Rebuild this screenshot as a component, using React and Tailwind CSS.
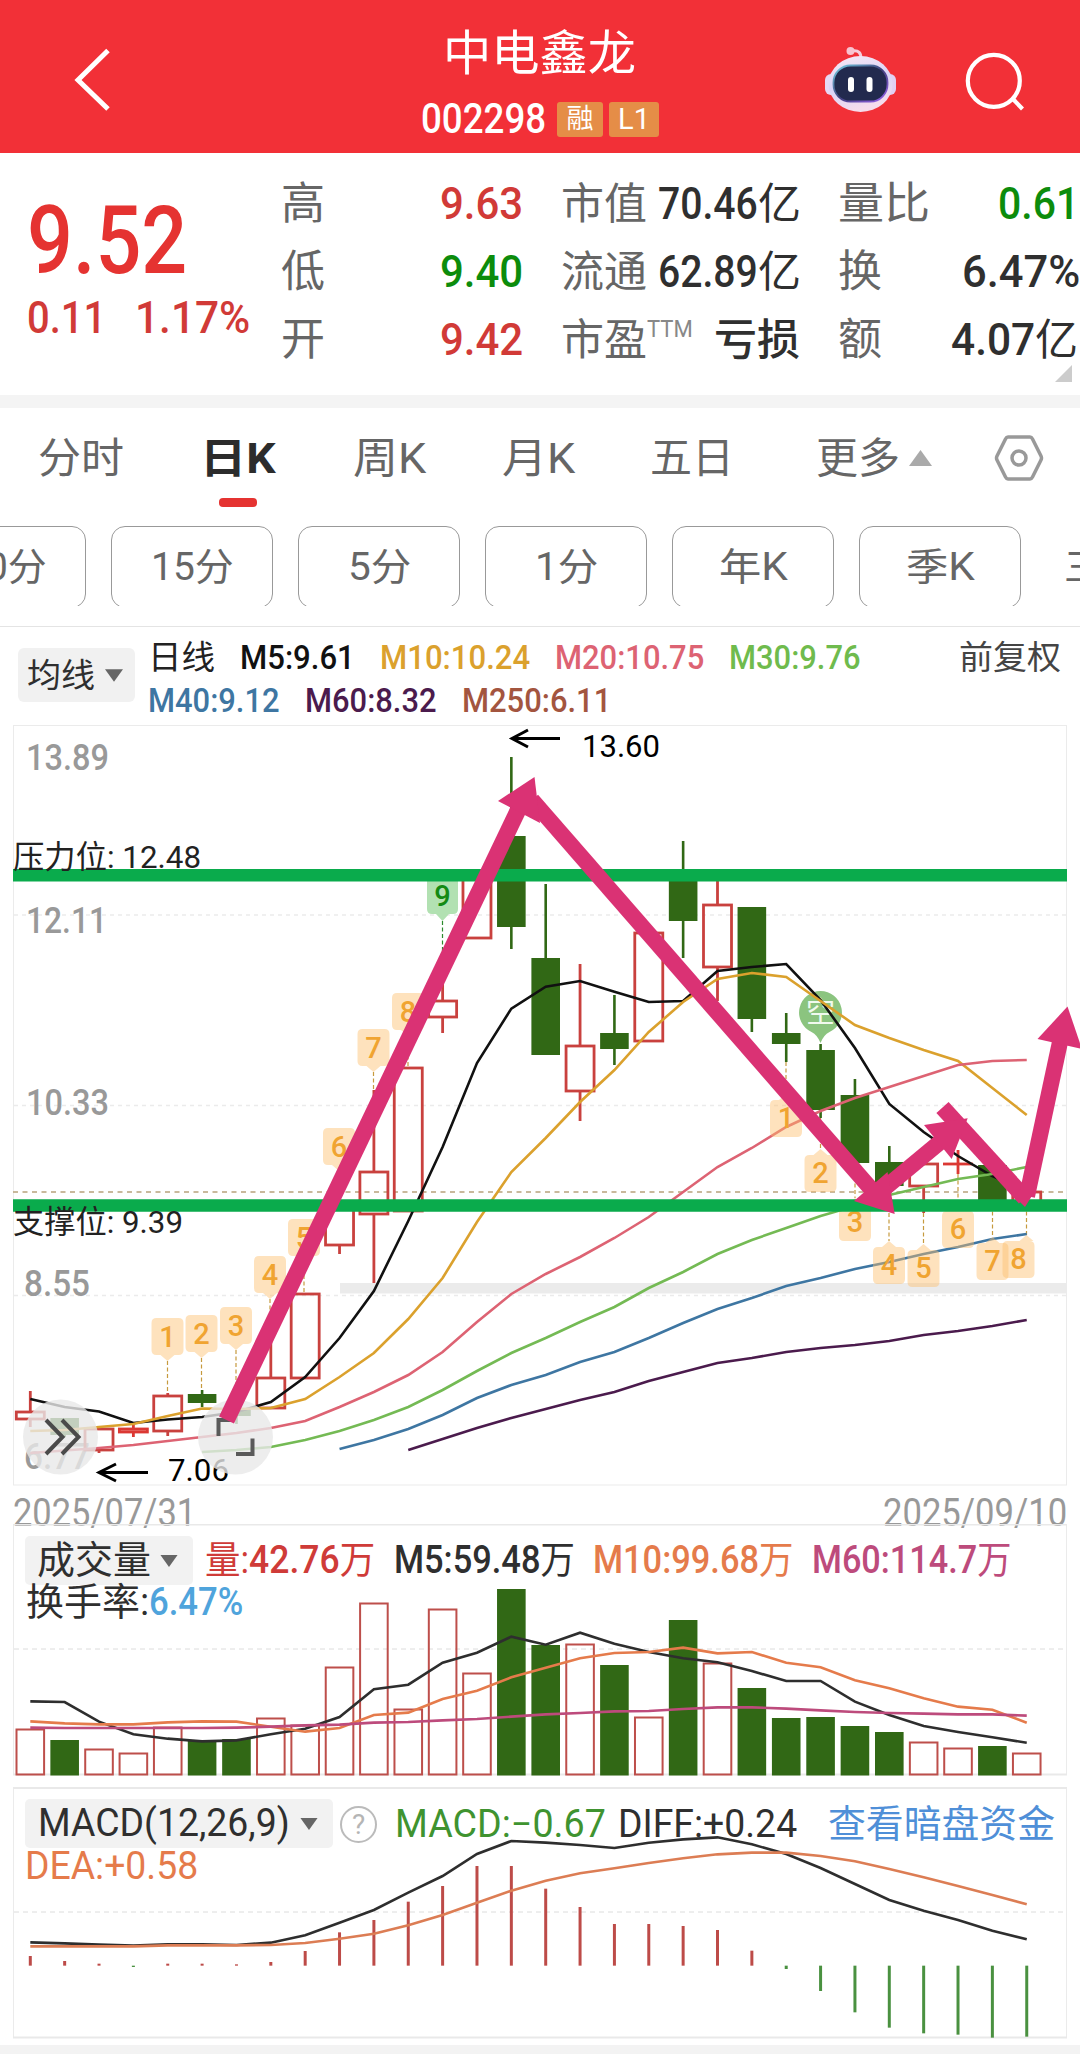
import { useLayoutEffect, useRef, useState } from "react";

const RED = "#c9413e";
const GREEN = "#316815";
const PINK = "#da3274";
const TAG = "#f0a431";

// x of the nth trading day, shared by all three charts
const cx = (i) => 30.3 + i * 34.36;

// [top, bottom, high, low, color]
const candles = [
  [1412, 1419, 1391, 1427, "r"],
  [1418, 1435, 1418, 1437, "g"],
  [1429, 1450, 1429, 1453, "r"],
  [1429, 1432, 1425, 1437, "r"],
  [1396, 1431, 1393, 1436, "r"],
  [1394, 1403, 1390, 1407, "g"],
  [1408, 1416, 1404, 1424, "g"],
  [1378, 1408, 1338, 1408, "r"],
  [1294, 1378, 1294, 1378, "r"],
  [1205, 1245, 1205, 1254, "r"],
  [1172, 1214, 1090, 1283, "r"],
  [1068, 1211, 1068, 1211, "r"],
  [1001, 1017, 983, 1033, "r"],
  [878, 938, 878, 938, "r"],
  [836, 927, 757, 949, "g"],
  [958, 1055, 884, 1055, "g"],
  [1046, 1091, 964, 1121, "r"],
  [1033, 1049, 995, 1065, "g"],
  [933, 1041, 933, 1041, "r"],
  [874, 921, 841, 958, "g"],
  [905, 967, 878, 1001, "r"],
  [907, 1019, 907, 1032, "g"],
  [1033, 1044, 1013, 1062, "g"],
  [1050, 1110, 1044, 1118, "g"],
  [1095, 1163, 1079, 1163, "g"],
  [1162, 1186, 1146, 1186, "g"],
  [1164, 1186, 1164, 1213, "r"],
  [1164, 1164, 1150, 1174, "r"],
  [1165, 1205, 1165, 1205, "g"],
  [1192, 1205, 1192, 1205, "r"],
];

const averages = [
  { color: "#111111", from: 0, y: [1399, 1407, 1411.5, 1423, 1419.5, 1417, 1412, 1402, 1377, 1338, 1291, 1221, 1147, 1063, 1008.6, 986.7, 981, 991.7, 1002, 1001, 971, 967, 964, 1000, 1048, 1104, 1132, 1156, 1176, 1191] },
  { color: "#dba12d", from: 0, y: [1431, 1430, 1427, 1424, 1416, 1408.5, 1409, 1408, 1399, 1377, 1353, 1319, 1278, 1222, 1172, 1138, 1102, 1070, 1032, 1002, 979, 973, 977, 1001, 1025, 1038, 1050, 1061, 1088, 1115] },
  { color: "#dd6373", from: 0, y: [1453, 1450.5, 1448, 1445, 1441, 1437, 1433, 1428, 1421, 1407, 1392, 1375, 1352, 1322, 1294, 1274, 1257, 1238, 1217, 1192, 1167, 1148, 1127, 1111, 1098, 1087, 1076, 1065, 1061, 1060] },
  { color: "#74ba54", from: 5, y: [1452, 1450, 1447, 1440, 1431, 1420, 1407, 1390, 1371, 1353, 1338, 1322, 1307, 1288, 1272, 1254, 1240, 1228, 1216, 1206, 1195, 1187, 1179, 1174, 1167] },
  { color: "#3e76a2", from: 9, y: [1449, 1440, 1429, 1415, 1398, 1385, 1375, 1362, 1352, 1338, 1323, 1309, 1298, 1286, 1278, 1269, 1262, 1254, 1247, 1239, 1234] },
  { color: "#4b1b4d", from: 11, y: [1450, 1439, 1428, 1418, 1409, 1400, 1392, 1381, 1372, 1363, 1358, 1352, 1348, 1345, 1341, 1335, 1331, 1326, 1320] },
];

// nine-turn counters: above the candle while rising, below while falling
const tagsAbove = [
  { n: 1, x: 167.5, y: 1318, to: 1393 },
  { n: 2, x: 201.5, y: 1315, to: 1390 },
  { n: 3, x: 236, y: 1307, to: 1404 },
  { n: 4, x: 270, y: 1256, to: 1340 },
  { n: 5, x: 304, y: 1219, to: 1293 },
  { n: 6, x: 339, y: 1128, to: 1200 },
  { n: 7, x: 373.5, y: 1029, to: 1092 },
  { n: 8, x: 408, y: 993, to: 1066 },
];
const tagsBelow = [
  { n: 1, x: 786, y: 1100, from: 1062 },
  { n: 2, x: 820.5, y: 1155, from: 1118 },
  { n: 3, x: 855, y: 1204, from: 1164 },
  { n: 4, x: 889, y: 1247, from: 1187 },
  { n: 5, x: 923.5, y: 1250, from: 1213 },
  { n: 6, x: 958, y: 1211, from: 1174 },
  { n: 7, x: 992.5, y: 1243, from: 1205 },
  { n: 8, x: 1018.5, y: 1241, from: 1205, px: 1026.5 },
];

const volumes = [
  [1729, "r"], [1740, "g"], [1749, "r"], [1753, "r"], [1727, "r"], [1740, "g"],
  [1739, "g"], [1718, "r"], [1725, "r"], [1667, "r"], [1603, "r"], [1709, "r"],
  [1609, "r"], [1673, "r"], [1589, "g"], [1645, "g"], [1644, "r"], [1665, "g"],
  [1717, "r"], [1620, "g"], [1663, "r"], [1688, "g"], [1718, "g"], [1717, "g"],
  [1726, "g"], [1732, "g"], [1742, "r"], [1748, "r"], [1746, "g"], [1753, "r"],
];
const volumeLines = [
  { color: "#2e2e2e", y: [514, 516, 575, 613, 626, 634, 631, 613, 596, 561, 478, 464, 398, 368, 320, 344, 308, 341, 366, 385, 397, 423, 453, 453, 515, 555, 588, 606, 622, 638] },
  { color: "#e57b4b", y: [574, 580, 583, 583, 577, 574, 575, 590, 605, 594, 555, 548, 507, 482, 442, 413, 385, 369, 366, 353, 370, 366, 398, 412, 451, 475, 505, 530, 539, 578] },
  { color: "#bd4b7c", y: [593, 594, 594, 594, 594, 594, 593, 590, 586, 584, 578, 576, 571, 567, 560, 553, 549, 544, 543, 537, 532, 532, 536, 541, 546, 549, 551, 553, 553, 557] },
];

const macdBars = [1278, 1293, 1301, 1311, 1301, 1301, 1303, 1296, 1263, 1207, 1170, 1115, 1068, 1008, 1008, 1076, 1131, 1182, 1182, 1188, 1200, 1262, 1317, 1383, 1447, 1493, 1510, 1514, 1523, 1520];
const macdLines = [
  { color: "#2e2e2e", y: [1237, 1240, 1244, 1247, 1243, 1243, 1245, 1238, 1216, 1178, 1140, 1088, 1038, 972, 933, 938, 945, 954, 938, 928, 922, 943, 972, 1014, 1062, 1110, 1142, 1170, 1202, 1228] },
  { color: "#dc7d54", y: [1249, 1249, 1249, 1249, 1246, 1246, 1246, 1245, 1239, 1226, 1211, 1186, 1155, 1118, 1082, 1052, 1030, 1015, 999, 985, 973, 968, 968, 978, 994, 1017, 1042, 1068, 1095, 1123] },
];

const sub = (v) => 1530 + v / 3;
const toPoints = (ys, from = 0, map = (v) => v) =>
  ys.map((y, i) => `${cx(i + from)},${map(y)}`).join(" ");

// Squeezes or widens one line of text so that it fills its box
function Fit({ className = "", children }) {
  const box = useRef(null);
  const text = useRef(null);
  const [scale, setScale] = useState(1);

  useLayoutEffect(() => {
    setScale(box.current.offsetWidth / text.current.offsetWidth);
  }, []);

  return (
    <span ref={box} className={`block shrink-0 whitespace-nowrap ${className}`}>
      <span
        ref={text}
        className="inline-block origin-left"
        style={{ transform: `scaleX(${scale})` }}
      >
        {children}
      </span>
    </span>
  );
}

function Caret({ up = false, className = "" }) {
  return (
    <svg viewBox="0 0 20 14" className={className} fill="currentColor">
      <path d={up ? "M10 0L20 14H0z" : "M0 0H20L10 14z"} />
    </svg>
  );
}

function Header() {
  return (
    <header className="flex h-[153px] bg-[#f23037] text-white">
      <div className="w-[420px] pt-[46px] pl-[72px]">
        <svg className="h-[68px] w-[40px]" viewBox="0 0 40 68" fill="none">
          <path d="M36 4.500L6 34L36 63" stroke="#fff" strokeWidth="5" />
        </svg>
      </div>
      <div className="flex w-[242px] flex-col">
        <Fit className="mt-[29px] ml-[23px] w-[193px] text-[48px] leading-[50px]">
          中电鑫龙
        </Fit>
        <div className="mt-[22px] flex items-center">
          <Fit className="ml-px w-[125px] text-[42px] leading-[36px] font-medium">
            002298
          </Fit>
          <span className="ml-[11px] flex h-[35px] w-[46px] items-center justify-center rounded-[3px] bg-[#e58d47] text-[27px] leading-none">
            融
          </span>
          <span className="ml-[6px] flex h-[35px] w-[50px] items-center justify-center rounded-[3px] bg-[#e58d47] text-[29px] leading-none">
            L1
          </span>
        </div>
      </div>
      <div className="flex flex-1 pt-[44px]">
        <svg className="ml-[161px] h-[72px] w-[76px]" viewBox="823 44 76 72">
          <defs>
            <linearGradient id="head" x1="0" y1="0" x2="0.3" y2="1">
              <stop offset="0" stopColor="#fbeaf3" />
              <stop offset="0.55" stopColor="#d9d3f7" />
              <stop offset="1" stopColor="#f5dcec" />
            </linearGradient>
            <linearGradient id="rim" x1="0" y1="0" x2="1" y2="1">
              <stop offset="0" stopColor="#76d3e6" />
              <stop offset="0.5" stopColor="#3e3f7c" />
              <stop offset="1" stopColor="#9b62ee" />
            </linearGradient>
          </defs>
          <path d="M852 51c7-1 9 2 9 8" stroke="#f6cddb" strokeWidth="3" fill="none" />
          <circle cx="850.500" cy="51" r="4" fill="#f8c3cf" />
          <rect x="825" y="74" width="12" height="21" rx="6" fill="#e6d8f4" />
          <rect x="884" y="74" width="12" height="21" rx="6" fill="#e2cff2" />
          <ellipse cx="860.500" cy="84" rx="32" ry="28" fill="url(#head)" />
          <rect x="833.500" y="65.500" width="54" height="36" rx="17" fill="#222a4e" stroke="url(#rim)" strokeWidth="1.800" />
          <rect x="848" y="77" width="6" height="15" rx="3" fill="#fff" />
          <rect x="866.500" y="77" width="6" height="15" rx="3" fill="#fff" />
        </svg>
        <svg className="ml-[65px] h-[72px] w-[64px]" viewBox="964 44 64 72" fill="none">
          <circle cx="993.800" cy="80.800" r="26" stroke="#fff" strokeWidth="4.200" />
          <path d="M1012 98L1022.500 109" stroke="#fff" strokeWidth="4.200" />
        </svg>
      </div>
    </header>
  );
}

function Quote() {
  return (
    <section className="relative flex h-[242px] text-[45px] leading-[68px] text-[#2f2f2f]">
      <div className="w-[281px] pl-[27px] text-[#d13a37]">
        <Fit className="mt-[43px] w-[160px] text-[95px] leading-[90px] font-medium text-[#e53331]">
          9.52
        </Fit>
        <div className="mt-[-2px] flex font-medium">
          <Fit className="w-[79px]">0.11</Fit>
          <Fit className="ml-[29px] w-[115px]">1.17%</Fit>
        </div>
      </div>
      <div className="w-[280px] pt-[17px]">
        <div className="flex">
          <span className="w-[159px] text-[44px] text-[#666]">高</span>
          <Fit className="w-[83px] font-medium text-[#d13a37]">9.63</Fit>
        </div>
        <div className="flex">
          <span className="w-[159px] text-[44px] text-[#666]">低</span>
          <Fit className="w-[83px] font-medium text-[#0c8c0c]">9.40</Fit>
        </div>
        <div className="flex">
          <span className="w-[159px] text-[44px] text-[#666]">开</span>
          <Fit className="w-[83px] font-medium text-[#d13a37]">9.42</Fit>
        </div>
      </div>
      <div className="w-[277px] pt-[17px]">
        <div className="flex">
          <span className="w-[97px] text-[43px] text-[#666]">市值</span>
          <Fit className="w-[100px] font-medium">70.46</Fit>
          <span className="text-[43px]">亿</span>
        </div>
        <div className="flex">
          <span className="w-[97px] text-[43px] text-[#666]">流通</span>
          <Fit className="w-[100px] font-medium">62.89</Fit>
          <span className="text-[43px]">亿</span>
        </div>
        <div className="flex">
          <span className="w-[86px] text-[43px] text-[#666]">市盈</span>
          <Fit className="mt-[-11px] w-[46px] text-[24px] text-[#888]">TTM</Fit>
          <span className="ml-[21px] text-[43px] font-medium">亏损</span>
        </div>
      </div>
      <div className="w-[242px] pt-[17px]">
        <div className="flex">
          <Fit className="w-[92px] text-[44px] text-[#666]">量比</Fit>
          <Fit className="ml-[68px] w-[81px] font-medium text-[#0c8c0c]">0.61</Fit>
        </div>
        <div className="flex">
          <span className="w-[124px] text-[44px] text-[#666]">换</span>
          <Fit className="w-[118px] font-medium">6.47%</Fit>
        </div>
        <div className="flex">
          <span className="w-[113px] text-[44px] text-[#666]">额</span>
          <Fit className="w-[84px] font-medium">4.07</Fit>
          <span className="text-[43px]">亿</span>
        </div>
      </div>
      <svg className="absolute right-[8px] bottom-[13px] size-[17px]" viewBox="0 0 17 17">
        <path d="M17 0V17H0z" fill="#ccc" />
      </svg>
    </section>
  );
}

function Tabs() {
  return (
    <nav className="flex h-[107px] text-[42px] leading-[102px] text-[#666]">
      <Fit className="ml-[38px] w-[86px]">分时</Fit>
      <div className="ml-[76px] w-[77px]">
        <Fit className="w-[76px] font-bold text-[#2c2c2c]">日K</Fit>
        <div className="mt-[-12px] ml-[19px] h-[9px] w-[38px] rounded-[4px] bg-[#e53331]" />
      </div>
      <Fit className="ml-[76px] w-[73px]">周K</Fit>
      <Fit className="ml-[76px] w-[73px]">月K</Fit>
      <Fit className="ml-[75px] w-[84px]">五日</Fit>
      <Fit className="ml-[82px] w-[84px]">更多</Fit>
      <Caret up className="mt-[41px] ml-[9px] h-[18px] w-[23px] text-[#aaa]" />
      <svg className="mt-[25px] ml-[62px] h-[50px] w-[50px]" viewBox="0 0 50 50" fill="none" stroke="#999" strokeWidth="3.500">
        <path strokeLinejoin="round" d="M14 4H36Q37.500 4 38.500 6L47 23Q48 25 47 27L38.500 44Q37.500 46 36 46H14Q12.500 46 11.500 44L3 27Q2 25 3 23L11.500 6Q12.500 4 14 4z" />
        <circle cx="25" cy="25" r="7" />
      </svg>
    </nav>
  );
}

function Periods() {
  const pill =
    "flex h-[82px] w-[162px] shrink-0 items-center justify-center rounded-[14px] border border-[#999]";

  return (
    <div className="mt-[11px] flex h-[80px] gap-[25px] overflow-hidden text-[38px] text-[#666]">
      <div className={`${pill} ml-[-76px]`}>
        <Fit className="w-[83px]">30分</Fit>
      </div>
      <div className={pill}>
        <Fit className="w-[83px]">15分</Fit>
      </div>
      <div className={pill}>
        <Fit className="w-[63px]">5分</Fit>
      </div>
      <div className={pill}>
        <Fit className="w-[63px]">1分</Fit>
      </div>
      <div className={pill}>
        <Fit className="w-[69px]">年K</Fit>
      </div>
      <div className={pill}>
        <Fit className="w-[69px]">季K</Fit>
      </div>
      <div className="flex h-[82px] shrink-0 items-center pl-[18px]">三日</div>
    </div>
  );
}

function AverageLegend() {
  return (
    <div className="mt-[20px] flex h-[95px] border-t border-[#e4e4e4] text-[33px] leading-[43px]">
      <div className="mt-[21px] ml-[18px] flex h-[54px] w-[117px] items-center rounded-[6px] bg-[#f1f1f1] pl-[9px] text-[#2f2f2f]">
        <Fit className="w-[68px]">均线</Fit>
        <Caret className="ml-[10px] h-[13px] w-[18px] text-[#666]" />
      </div>
      <div className="mt-[9px] ml-[13px] w-[761px]">
        <div className="flex font-medium">
          <Fit className="w-[67px] font-normal text-[#222]">日线</Fit>
          <Fit className="ml-[25px] w-[115px] text-[#111]">M5:9.61</Fit>
          <Fit className="ml-[25px] w-[150px] text-[#dba12d]">M10:10.24</Fit>
          <Fit className="ml-[25px] w-[149px] text-[#dd6373]">M20:10.75</Fit>
          <Fit className="ml-[25px] w-[132px] text-[#6fbb4d]">M30:9.76</Fit>
        </div>
        <div className="flex font-medium">
          <Fit className="w-[132px] text-[#3e76a2]">M40:9.12</Fit>
          <Fit className="ml-[25px] w-[132px] text-[#4b1b4d]">M60:8.32</Fit>
          <Fit className="ml-[25px] w-[149px] text-[#a3553f]">M250:6.11</Fit>
        </div>
      </div>
      <Fit className="mt-[9px] ml-[50px] w-[102px] text-[#444]">前复权</Fit>
    </div>
  );
}

function Candle({ i, data }) {
  const [top, bottom, high, low, color] = data;
  const x = cx(i);
  if (color === "g") {
    return (
      <g fill={GREEN}>
        <rect x={x - 1.3} y={high} width="2.600" height={low - high} />
        <rect x={x - 14.3} y={top} width="28.600" height={bottom - top} />
      </g>
    );
  }
  return (
    <g stroke={bottom - top < 5 ? "#db3833" : RED} strokeWidth="2.800" fill="none">
      <path d={`M${x} ${high}V${top}M${x} ${bottom}V${low}`} />
      {top === bottom ? (
        <path d={`M${x - 15} ${top}H${x + 15}`} />
      ) : (
        <rect x={x - 14} y={top} width="28" height={bottom - top} />
      )}
    </g>
  );
}

function CounterTag({ n, x, y, px = x, below }) {
  const tip = below
    ? `M${px - 7} ${y}L${px} ${y - 6}L${px + 7} ${y}z`
    : `M${x - 7} ${y + 37}L${x} ${y + 43}L${x + 7} ${y + 37}z`;
  return (
    <g>
      <path
        d={`M${x - 11} ${y}h22q5 0 5 5v27q0 5 -5 5h-22q-5 0 -5 -5v-27q0 -5 5 -5z${tip}`}
        fill="#fcbe6d"
        fillOpacity="0.450"
      />
      <text x={x} y={y + (below ? 27.500 : 29)} textAnchor="middle" fontSize="29" fontWeight="500" fill={TAG}>
        {n}
      </text>
    </g>
  );
}

function AxisText({ x, y, w, size = 37, fill = "#999", weight = 400, children }) {
  return (
    <text x={x} y={y} textLength={w} lengthAdjust="spacingAndGlyphs" fontSize={size} fill={fill} fontWeight={weight}>
      {children}
    </text>
  );
}

function PriceChart() {
  return (
    <svg className="block h-[775px] w-full" viewBox="0 721 1080 775">
      <rect x="13.500" y="725.500" width="1053" height="759.500" fill="none" stroke="#ebebeb" />
      <rect x="340" y="1283" width="727" height="10.500" fill="#ebebeb" />
      <g stroke="#ebebeb" strokeWidth="1.500" strokeDasharray="4 4">
        <path d="M14 915H1067M14 1105.500H1067M14 1295.500H1067" />
      </g>
      <path d="M13 1192H1067" stroke="#b8a27c" strokeWidth="1.600" strokeDasharray="5 4.500" />

      <AxisText x={26} y={770} w={83} weight={500}>13.89</AxisText>
      <AxisText x={26} y={933} w={81} weight={500}>12.11</AxisText>
      <AxisText x={26} y={1115} w={83} weight={500}>10.33</AxisText>
      <AxisText x={24} y={1296} w={66} weight={500}>8.55</AxisText>
      <AxisText x={24} y={1469} w={66} weight={500}>6.77</AxisText>

      {/* Counters and their leader lines */}
      <g stroke="#c69a3e" strokeWidth="1.200" strokeDasharray="4 2.500">
        {tagsAbove.map((t) => (
          <path key={t.n} d={`M${t.x} ${t.y + 43}V${t.to}`} />
        ))}
        {tagsBelow.map((t) => (
          <path key={t.n} d={`M${t.px || t.x} ${t.from}V${t.y - 6}`} />
        ))}
        <path d="M442.500 921V983" stroke="#2d8a2d" />
      </g>

      {candles.map((c, i) => (
        <Candle key={i} i={i} data={c} />
      ))}

      <path d="M427 876h31v33q0 5 -5 5h-4l-6.500 7l-6.500 -7h-4q-5 0 -5 -5z" fill="#b2e1b2" />
      <text x="442.500" y="906" textAnchor="middle" fontSize="29" fontWeight="500" fill="#138a13">9</text>

      <path d="M820.500 991a21.500 21.500 0 0 1 9 41q-6 3 -9 11q-3 -8 -9 -11a21.500 21.500 0 0 1 9 -41z" fill="#8bc47f" />
      <text x="820.500" y="1023" textAnchor="middle" fontSize="29" fill="#f1faee">空</text>

      {averages.map((line) => (
        <polyline key={line.color} points={toPoints(line.y, line.from)} fill="none" stroke={line.color} strokeWidth="2.600" />
      ))}

      {tagsAbove.map((t) => (
        <CounterTag key={t.n} {...t} />
      ))}
      {tagsBelow.map((t) => (
        <CounterTag key={t.n} {...t} below />
      ))}

      {/* High / low markers */}
      <g stroke="#000" strokeWidth="3" fill="none">
        <path d="M560 738.500H513M528 730L512 738.500L528 747" />
        <path d="M148 1472.500H100M116 1464L99 1472.500L116 1481" />
      </g>
      <AxisText x={582} y={757} w={78} size={32} fill="#000">13.60</AxisText>
      <AxisText x={168} y={1481} w={61} size={32} fill="#000">7.06</AxisText>

      {/* Resistance and support */}
      <path d="M13 875.300H1067M13 1205.500H1067" stroke="#0aab4c" strokeWidth="12.600" />
      <AxisText x={13} y={868} w={188} size={32} fill="#222">压力位: 12.48</AxisText>
      <AxisText x={13} y={1233} w={170} size={32} fill="#222">支撑位: 9.39</AxisText>

      {/* Floating buttons */}
      <g fill="#e9e9e9" fillOpacity="0.800">
        <circle cx="60.500" cy="1437" r="37.500" />
        <circle cx="235.500" cy="1437" r="37.500" />
      </g>
      <g stroke="#4a4a4a" strokeWidth="4" fill="none">
        <path d="M46 1420L62.500 1437L46 1454M62 1420L78.500 1437L62 1454" />
        <path d="M218.500 1436V1420H232M236 1454H252.500V1438.500" stroke="#5a5a5a" />
      </g>

      {/* Trend arrows */}
      <g stroke={PINK} strokeWidth="16" fill="none">
        <path d="M226.500 1420L521 804" strokeWidth="16.500" />
        <path d="M532 800L872 1190" />
        <path d="M880 1192L945 1138" />
        <path d="M942.500 1107.500L1025 1198" strokeWidth="16.500" />
        <path d="M1027 1196L1060 1042" />
      </g>
      <g fill={PINK}>
        <path d="M534.500 777L498 801L540 823z" />
        <path d="M894.700 1214L854 1201L887.500 1172z" />
        <path d="M967.700 1118.300L924 1125L951.700 1159z" />
        <path d="M1025 1207L1009 1191L1035 1191z" />
        <path d="M1067.500 1006.500L1037.500 1039L1082 1049z" />
      </g>
    </svg>
  );
}

function VolumePanel() {
  return (
    <section className="relative h-[251px] text-[38px] leading-[49px] text-[#2f2f2f]">
      <svg className="absolute inset-0 h-[252px] w-full" viewBox="0 1524 1080 252">
        <path d="M13.500 1524V1775M1066.500 1524V1775" stroke="#ebebeb" />
        <path d="M13 1524.500H1067M13 1774.500H1067" stroke="#e9e9e9" strokeWidth="2" />
        <path d="M14 1649H1067" stroke="#dcdcdc" strokeDasharray="5 4" />
      </svg>
      <div className="relative pt-[12px] pl-[25px]">
        <div className="flex">
          <div className="flex h-[49px] w-[168px] items-center rounded-[5px] bg-[#f2f2f2] pl-[12px]">
            <Fit className="w-[114px]">成交量</Fit>
            <Caret className="ml-[9px] h-[12px] w-[18px] text-[#666]" />
          </div>
          <Fit className="ml-[12px] w-[170px] text-[#cf3b38]">
            量:<span className="font-medium">42.76</span>万
          </Fit>
          <Fit className="ml-[19px] w-[181px]">
            <span className="font-medium">M5:59.48</span>万
          </Fit>
          <Fit className="ml-[18px] w-[200px] text-[#e57b4b]">
            <span className="font-medium">M10:99.68</span>万
          </Fit>
          <Fit className="ml-[19px] w-[199px] text-[#bd4b7c]">
            <span className="font-medium">M60:114.7</span>万
          </Fit>
        </div>
        <div className="mt-[-7px] flex">
          <Fit className="ml-[1px] w-[123px]">换手率:</Fit>
          <Fit className="w-[94px] font-medium text-[#4fa4dc]">6.47%</Fit>
        </div>
      </div>
      <svg className="absolute inset-0 h-[252px] w-full" viewBox="0 1524 1080 252">
        {volumes.map(([top, color], i) =>
          color === "g" ? (
            <rect key={i} x={cx(i) - 14.3} y={top} width="28.600" height={1775.5 - top} fill={GREEN} />
          ) : (
            <rect key={i} x={cx(i) - 13.8} y={top + 0.5} width="27.600" height={1774 - top} fill="none" stroke="#bd4f4b" strokeWidth="2" />
          )
        )}
        {volumeLines.map((line) => (
          <polyline key={line.color} points={toPoints(line.y, 0, sub)} fill="none" stroke={line.color} strokeWidth="2.600" />
        ))}
      </svg>
    </section>
  );
}

function MacdPanel() {
  return (
    <section className="relative mt-[12px] h-[251px] text-[38px] leading-[51px] text-[#2f2f2f]">
      <svg className="absolute inset-0 h-[252px] w-full" viewBox="0 1787 1080 252">
        <path d="M13.500 1787V2038M1066.500 1787V2038" stroke="#ebebeb" />
        <path d="M13 1788H1067M13 2037.500H1067" stroke="#e9e9e9" strokeWidth="2" />
        <path d="M14 1912H1067" stroke="#dcdcdc" strokeDasharray="5 4" />
      </svg>
      <div className="relative pt-[12px] pl-[25px]">
        <div className="flex">
          <div className="flex h-[49px] w-[308px] items-center rounded-[5px] bg-[#f2f2f2] pl-[13px]">
            <Fit className="w-[252px]">MACD(12,26,9)</Fit>
            <Caret className="ml-[10px] h-[12px] w-[18px] text-[#666]" />
          </div>
          <div className="mt-[7px] ml-[7px] flex size-[37px] items-center justify-center rounded-full border-[2.500px] border-[#bbb] text-[28px] leading-none text-[#b5b5b5]">
            ?
          </div>
          <Fit className="ml-[18px] w-[211px] text-[#3f9330]">MACD:−0.67</Fit>
          <Fit className="ml-[12px] w-[179px]">DIFF:+0.24</Fit>
          <Fit className="ml-[31px] w-[227px] text-[#4f8fd8]">查看暗盘资金</Fit>
        </div>
        <div className="mt-[-9px] flex">
          <Fit className="w-[173px] text-[#e57b4b]">DEA:+0.58</Fit>
        </div>
      </div>
      <svg className="absolute inset-0 h-[252px] w-full" viewBox="0 1787 1080 252">
        {macdBars.map((v, i) => (
          <path key={i} d={`M${cx(i)} ${sub(1307)}V${sub(v)}`} stroke={v < 1307 ? "#bd4b48" : "#4a9140"} strokeWidth="3" />
        ))}
        {macdLines.map((line) => (
          <polyline key={line.color} points={toPoints(line.y, 0, sub)} fill="none" stroke={line.color} strokeWidth="2.600" />
        ))}
      </svg>
    </section>
  );
}

export default function App() {
  return (
    <div className="h-[2054px] w-[1080px] overflow-hidden bg-white font-['Roboto','Noto_Sans_CJK_SC',sans-serif]">
      <Header />
      <Quote />
      <div className="h-[13px] bg-[#f4f4f4]" />
      <Tabs />
      <Periods />
      <AverageLegend />
      <PriceChart />
      <div className="flex h-[28px] justify-between px-[13px] text-[38px] leading-[34px] text-[#999]">
        <Fit className="w-[183px]">2025/07/31</Fit>
        <Fit className="w-[184px]">2025/09/10</Fit>
      </div>
      <VolumePanel />
      <MacdPanel />
      <div className="mt-[7px] h-[9px] bg-[#f3f3f3]" />
    </div>
  );
}
